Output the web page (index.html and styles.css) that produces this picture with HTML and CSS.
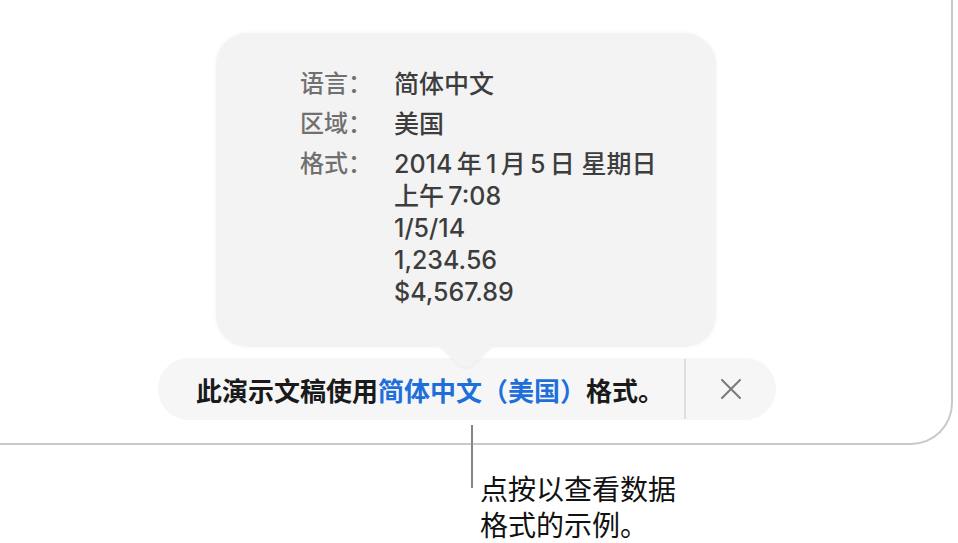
FILE: index.html
```html
<!DOCTYPE html>
<html lang="zh-CN">
<head>
<meta charset="utf-8">
<title>格式</title>
<link rel="stylesheet" href="styles.css">
</head>
<body>
<div class="stage">
  <div class="window">
    <div class="popover">
      <div class="info">
        <div class="label">语言：</div>
        <div class="value">简体中文</div>
        <div class="label">区域：</div>
        <div class="value">美国</div>
        <div class="label">格式：</div>
        <div class="value">2014&thinsp;年&thinsp;1&thinsp;月&thinsp;5&thinsp;日 星期日<br>上午&thinsp;7:08<br>1/5/14<br>1,234.56<br>$4,567.89</div>
      </div>
      <svg class="arrow" width="52" height="22" viewBox="0 0 52 22">
        <path d="M0 0 L18 18 Q26 25 34 18 L52 0 Z" fill="#f3f3f3"/>
      </svg>
    </div>
    <div class="bar">
      <div class="bar-text">此演示文稿使用<span class="link">简体中文（美国）</span>格式。</div>
      <div class="sep"></div>
      <div class="close">
        <svg width="20" height="20" viewBox="0 0 20 20"><path d="M1 1 L19 19 M19 1 L1 19" stroke="#7a7a7a" stroke-width="2" stroke-linecap="round"/></svg>
      </div>
    </div>
  </div>
  <div class="callout">
    <div class="leader"></div>
    <div class="note">点按以查看数据<br>格式的示例。</div>
  </div>
</div>
</body>
</html>
```
FILE: styles.css
```css
* { box-sizing: border-box; }
html, body { margin: 0; padding: 0; background: #ffffff; }
body {
  width: 958px;
  height: 543px;
  overflow: hidden;
  font-family: "Inter", "Noto Sans CJK SC", sans-serif;
}
.stage { width: 958px; height: 543px; }
.window {
  margin: -20px 0 0 -20px;
  width: 973px;
  height: 465px;
  border-right: 2px solid #c9c9c9;
  border-bottom: 2px solid #c9c9c9;
  border-bottom-right-radius: 42px;
  padding: 53px 0 0 20px;
  display: flex;
  flex-direction: column;
}
.popover {
  position: relative;
  margin-left: 216px;
  width: 500px;
  height: 314px;
  background: #f3f3f3;
  border-radius: 32px;
  box-shadow: 0 0 4px rgba(0,0,0,0.05);
  padding: 35px 0 0 84px;
}
.info {
  display: grid;
  grid-template-columns: 94px auto;
  row-gap: 8px;
  font-size: 24px;
  line-height: 32px;
  font-weight: 500;
}
.label { color: #707070; }
.value { color: #3d3d3d; font-size: 25px; }
.arrow {
  position: absolute;
  left: 224px;
  top: 313px;
  filter: drop-shadow(0 1px 1px rgba(0,0,0,0.06));
}
.bar {
  margin-top: 11px;
  margin-left: 158px;
  width: 618px;
  height: 62px;
  background: #f6f6f6;
  border-radius: 31px;
  display: flex;
  align-items: center;
  padding-left: 38px;
}
.bar-text {
  flex: 1;
  font-size: 26px;
  font-weight: 700;
  color: #1a1a1a;
  white-space: nowrap;
}
.link { color: #1f6fdb; }
.sep {
  width: 2px;
  height: 60px;
  background: #dedede;
}
.close {
  width: 90px;
  display: flex;
  justify-content: center;
  align-items: center;
}
.callout {
  display: flex;
  margin-top: -20px;
  margin-left: 471px;
}
.leader {
  width: 2px;
  height: 63px;
  background: #858585;
}
.note {
  margin: 45px 0 0 7px;
  font-family: "Noto Sans CJK SC", sans-serif;
  font-size: 28px;
  line-height: 36px;
  color: #111111;
}
```
